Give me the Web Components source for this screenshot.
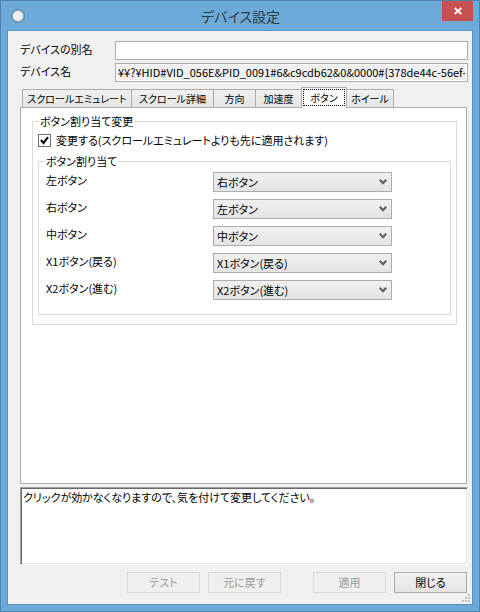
<!DOCTYPE html>
<html lang="ja">
<head>
<meta charset="utf-8">
<title>デバイス設定</title>
<style>
    body {
        --face: #f0f0f0;
        --line: #acacac;
        --frame: #6caad9;
        color: #000;
        font-family: "Noto Sans CJK JP", sans-serif;
        font-feature-settings: "palt";
        font-size: 11px;
        line-height: 16px;
        margin: 0;
    }
</style>
</head>
<body>
<dialog-window caption="デバイス設定">
    <text-field label="デバイスの別名"></text-field>
    <text-field label="デバイス名" readonly value="¥¥?¥HID#VID_056E&amp;PID_0091#6&amp;c9cdb62&amp;0&amp;0000#{378de44c-56ef-"></text-field>
    <tab-control>
        <tab-item slot="tabs">スクロールエミュレート</tab-item>
        <tab-item slot="tabs">スクロール詳細</tab-item>
        <tab-item slot="tabs">方向</tab-item>
        <tab-item slot="tabs">加速度</tab-item>
        <tab-item slot="tabs" selected>ボタン</tab-item>
        <tab-item slot="tabs">ホイール</tab-item>
        <group-box legend="ボタン割り当て変更">
            <check-field checked>変更する(スクロールエミュレートよりも先に適用されます)</check-field>
            <group-box legend="ボタン割り当て" rows>
                <button-select label="左ボタン" value="右ボタン"></button-select>
                <button-select label="右ボタン" value="左ボタン"></button-select>
                <button-select label="中ボタン" value="中ボタン"></button-select>
                <button-select label="X1ボタン(戻る)" value="X1ボタン(戻る)"></button-select>
                <button-select label="X2ボタン(進む)" value="X2ボタン(進む)"></button-select>
            </group-box>
        </group-box>
    </tab-control>
    <memo-box>クリックが効かなくなりますので、気を付けて変更してください。</memo-box>
    <push-button slot="actions" disabled>テスト</push-button>
    <push-button slot="actions" disabled>元に戻す</push-button>
    <push-button slot="actions" disabled class="apart">適用</push-button>
    <push-button slot="actions">閉じる</push-button>
</dialog-window>

<script>
const BASE = `*,*::before,*::after { box-sizing: border-box; margin: 0; padding: 0; }
    button, input, select, textarea { border-radius: 0; color: inherit; font: inherit; font-feature-settings: inherit; outline: none; }`;

class BaseElement extends HTMLElement {
    constructor() {
        super();
        this.attachShadow({mode: 'open'});
    }

    connectedCallback() {
        this.shadowRoot.innerHTML = `<style>${BASE}${this.CSS()}</style>${this.HTML()}`;
    }

    attr(name) {
        return (this.getAttribute(name) || '').replace(/&/g, '&amp;').replace(/"/g, '&quot;');
    }

    flag(name) {
        return this.hasAttribute(name) ? name : '';
    }
}

class DialogWindow extends BaseElement {
    HTML() {
        return `<header>
            <svg width="16" height="16" viewBox="0 0 16 16" aria-hidden="true">
                <circle cx="8" cy="8" r="7" fill="#55819f" opacity=".7"/>
                <circle cx="8" cy="8" r="6" fill="#a2a9ad"/>
                <circle cx="8" cy="8" r="5" fill="#f0f0f0"/>
            </svg>
            <h1>${this.attr('caption')}</h1>
            <button type="button" aria-label="閉じる">
                <svg width="8" height="8" viewBox="0 0 8 8"><path d="M.7 1l6.6 6M7.3 1L.7 7" stroke="#fff" stroke-width="1.7"/></svg>
            </button>
        </header>
        <main>
            <slot></slot>
            <footer><slot name="actions"></slot></footer>
            <svg class="grip" width="8" height="8" viewBox="0 0 8 8" fill="#bfbfbf" aria-hidden="true">
                <path d="M6 0h2v2H6zM3 3h2v2H3zM6 3h2v2H6zM0 6h2v2H0zM3 6h2v2H3zM6 6h2v2H6z"/>
            </svg>
        </main>`;
    }

    CSS() {
        return `:host {
            background: var(--frame);
            border: 1px solid #4f83ae;
            box-sizing: border-box;
            display: flex;
            flex-direction: column;
            min-height: 100vh;
            padding: 0 6px 6px;
        }
        header {
            align-items: center;
            display: grid;
            grid-template-columns: 32px 1fr 31px;
            height: 29px;
        }
        header > svg { margin-left: 3px; }
        h1 {
            color: #2b3a47;
            font-size: 14px;
            font-weight: normal;
            line-height: 28px;
            text-align: center;
        }
        header button {
            align-self: start;
            background: #c75050;
            border: 0;
            height: 20px;
            line-height: 0;
            width: 31px;
        }
        main {
            background: var(--face);
            border: 1px solid #5d92bd;
            display: flex;
            flex: 1;
            flex-direction: column;
            gap: 3px;
            padding: 10px 4px 11px 12px;
            position: relative;
        }
        footer {
            display: flex;
            gap: 8px;
            justify-content: flex-end;
            margin: 4px 1px 0 0;
        }
        .grip { bottom: 2px; position: absolute; right: 2px; }`;
    }
}

class TextField extends BaseElement {
    HTML() {
        return `<label for="field">${this.attr('label')}</label>
        <input id="field" type="text" value="${this.attr('value')}" ${this.flag('readonly')}>`;
    }

    CSS() {
        return `:host {
            align-items: start;
            display: grid;
            grid-template-columns: 95px 1fr;
        }
        input {
            background: #fff;
            border: 1px solid var(--line);
            height: 19px;
            min-width: 0;
            padding: 0 2px 1px;
        }
        input:read-only {
            background: var(--face);
            box-shadow: inset 0 0 0 1px #fff;
        }`;
    }
}

class TabControl extends BaseElement {
    HTML() {
        return `<div id="tabs" role="tablist"><slot name="tabs"></slot></div>
        <div id="page" role="tabpanel"><slot></slot></div>`;
    }

    CSS() {
        return `:host {
            display: flex;
            flex: 1;
            flex-direction: column;
            margin-top: 2px;
        }
        #tabs {
            align-items: end;
            display: grid;
            grid-template-columns: 110px 82px 42px 46px 45px 47px;
            padding-left: 2px;
        }
        #page {
            background: #fff;
            border: 1px solid var(--line);
            flex: 1;
            margin-right: 1px;
            padding: 5px 9px 5px 11px;
        }`;
    }
}

class TabItem extends BaseElement {
    HTML() {
        const on = this.hasAttribute('selected');
        return `<button type="button" role="tab" aria-selected="${on}"><span><slot></slot></span></button>`;
    }

    CSS() {
        return `:host { display: block; font-size: 10px; }
        button {
            background: linear-gradient(#f0f0f0, #e5e5e5);
            border: 1px solid var(--line);
            border-bottom: 0;
            border-left-width: 0;
            display: block;
            height: 18px;
            white-space: nowrap;
            width: 100%;
        }
        :host(:first-child) button { border-left-width: 1px; }
        :host([selected]) { margin: 0 0 -1px -1px; position: relative; }
        :host([selected]) button {
            background: #fff;
            border-left-width: 1px;
            height: 21px;
            padding: 0 1px 1px;
        }
        :host([selected]) span {
            border: 1px dotted #000;
            display: block;
            line-height: 15px;
        }`;
    }
}

class GroupBox extends BaseElement {
    HTML() {
        return `<fieldset><legend>${this.attr('legend')}</legend><slot></slot></fieldset>`;
    }

    CSS() {
        return `:host { display: block; }
        fieldset {
            border: 1px solid #dcdcdc;
            min-width: 0;
            padding: 3px 5px 9px;
        }
        legend { margin-left: 1px; padding: 0 1px; }
        :host([rows]) { margin-top: 5px; }
        :host([rows]) fieldset {
            display: grid;
            gap: 7px;
            padding: 3px 7px 14px;
        }
        :host([rows]) legend { margin-left: -1px; }`;
    }
}

class CheckField extends BaseElement {
    HTML() {
        return `<input id="check" type="checkbox" ${this.flag('checked')}>
        <label for="check"><slot></slot></label>`;
    }

    CSS() {
        return `:host { align-items: center; display: flex; gap: 5px; }
        input {
            appearance: none;
            background: #fff;
            border: 1px solid #707070;
            flex: none;
            height: 13px;
            width: 13px;
        }
        input:checked {
            background: #fff url("data:image/svg+xml,%3Csvg xmlns='http://www.w3.org/2000/svg' viewBox='0 0 11 11'%3E%3Cpath d='M2 5l2.5 3L9 2.2' fill='none' stroke='%23111' stroke-width='2.2'/%3E%3C/svg%3E");
        }`;
    }
}

class ButtonSelect extends BaseElement {
    HTML() {
        const options = ['左ボタン', '右ボタン', '中ボタン', 'X1ボタン(戻る)', 'X2ボタン(進む)'];
        const value = this.getAttribute('value');
        return `<label for="action">${this.attr('label')}</label>
        <select id="action">
            ${options.map(o => `<option ${o === value ? 'selected' : ''}>${o}</option>`).join('')}
        </select>`;
    }

    CSS() {
        return `:host {
            align-items: start;
            display: grid;
            grid-template-columns: 167px minmax(0, 179px);
        }
        select {
            appearance: none;
            background: url("data:image/svg+xml,%3Csvg xmlns='http://www.w3.org/2000/svg' viewBox='0 0 8 6'%3E%3Cpath d='M.8 .8L4 4.2 7.2 .8' fill='none' stroke='%23606060' stroke-width='2.2'/%3E%3C/svg%3E") no-repeat right 4px center / 8px 6px, linear-gradient(#f0f0f0, #e4e4e4);
            border: 1px solid var(--line);
            height: 20px;
            padding: 0 16px 1px 3px;
            width: 100%;
        }`;
    }
}

class MemoBox extends BaseElement {
    HTML() {
        return `<textarea readonly aria-label="説明">${this.textContent}</textarea>`;
    }

    CSS() {
        return `:host { display: flex; }
        textarea {
            background: #fff;
            border: 1px solid;
            border-color: #a0a0a0 #fff #fff #a0a0a0;
            box-shadow: inset 1px 1px #696969, inset -1px -1px #e3e3e3;
            flex: 1;
            height: 78px;
            padding: 1px 2px;
            resize: none;
        }`;
    }
}

class PushButton extends BaseElement {
    HTML() {
        return `<button type="button" ${this.flag('disabled')}><slot></slot></button>`;
    }

    CSS() {
        return `:host { display: block; }
        :host(.apart) { margin-left: 24px; }
        button {
            background: linear-gradient(#f0f0f0, #e5e5e5);
            border: 1px solid var(--line);
            display: block;
            height: 21px;
            padding-bottom: 2px;
            width: 73px;
        }
        button:disabled {
            background: #efefef;
            border-color: #d9d9d9;
            color: #9a9a9a;
        }`;
    }
}

customElements.define('dialog-window', DialogWindow);
customElements.define('text-field', TextField);
customElements.define('tab-control', TabControl);
customElements.define('tab-item', TabItem);
customElements.define('group-box', GroupBox);
customElements.define('check-field', CheckField);
customElements.define('button-select', ButtonSelect);
customElements.define('memo-box', MemoBox);
customElements.define('push-button', PushButton);
</script>
</body>
</html>
